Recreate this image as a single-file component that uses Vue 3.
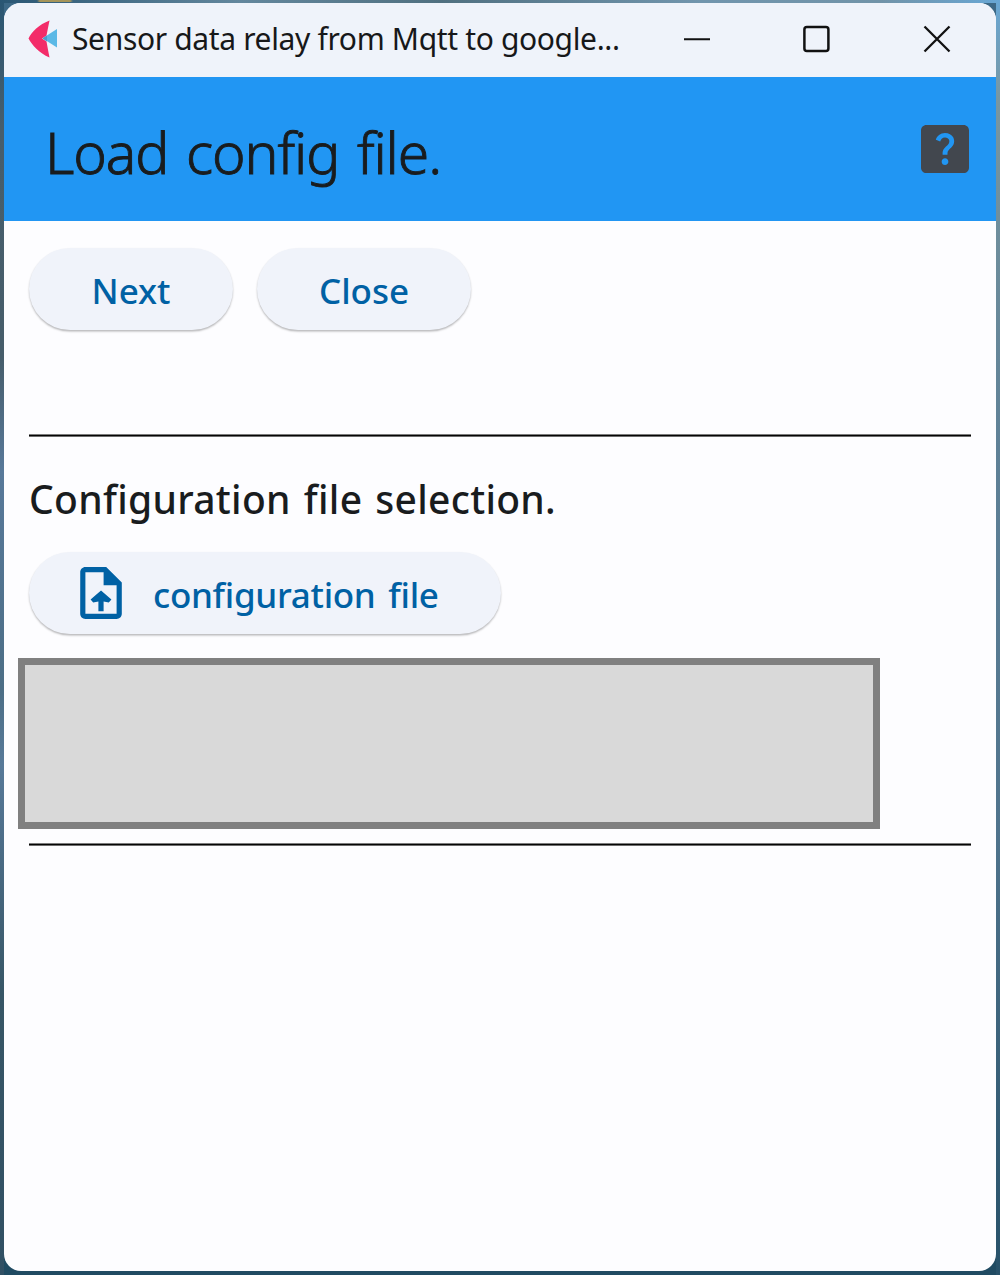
<script setup>
const title = 'Sensor data relay from Mqtt to google...'
const actions = [
  { label: 'Next', kind: 'next' },
  { label: 'Close', kind: 'close' },
]
</script>

<template>
  <div class="desktop">
    <main class="window">
      <header class="titlebar">
        <svg class="logo" viewBox="0 0 30 38" aria-hidden="true">
          <path d="M29 9 14.500 18.200 29 27.500Z" fill="#5bb9e6" />
          <path d="M21.500 .5C11 4.500 3.500 12 .5 18.500 4 25 11 33 21.500 37.500Q20 30 18.500 21.500L14 18.500l4.500-3Q20 8 21.500 .5Z" fill="#f32c69" />
          <path d="M19 15.500 14.500 18.500 19 21.500Z" fill="#4b9ccc" />
        </svg>
        <span class="caption">{{ title }}</span>
        <nav class="controls">
          <svg viewBox="0 0 28 28"><path d="M1 14.300H27" stroke-width="2" /></svg>
          <svg viewBox="0 0 28 28"><rect x="1.400" y="2" width="24" height="24" rx="2.500" stroke-width="2.500" /></svg>
          <svg viewBox="0 0 28 28"><path d="M1.500 1.500 26.500 26.500M26.500 1.500 1.500 26.500" stroke-width="2.300" /></svg>
        </nav>
      </header>

      <section class="appbar">
        <h1>Load config file.</h1>
        <svg class="help" viewBox="3 3 18 18" aria-label="Help">
          <path d="M19 3H5c-1.1 0-2 .9-2 2v14c0 1.1.9 2 2 2h14c1.1 0 2-.9 2-2V5c0-1.1-.9-2-2-2zm-6.99 15c-.7 0-1.26-.56-1.26-1.26 0-.71.56-1.25 1.26-1.25.71 0 1.25.54 1.25 1.25-.01.69-.54 1.26-1.25 1.26zm3.01-7.4c-.76 1.11-1.48 1.46-1.87 2.17-.16.29-.22.48-.22 1.41h-1.82c0-.49-.08-1.29.31-1.98.49-.87 1.42-1.39 1.96-2.16.57-.81.25-2.33-1.37-2.33-1.06 0-1.58.8-1.8 1.48l-1.65-.7C9.01 7.15 10.22 6 11.99 6c1.48 0 2.49.67 3.01 1.52.44.72.7 2.07.02 3.08z" />
        </svg>
      </section>

      <section class="content">
        <div class="actions">
          <button v-for="a in actions" :key="a.kind" class="pill" :class="a.kind"><span class="label">{{ a.label }}</span></button>
        </div>
        <hr />
        <h2>Configuration file selection.</h2>
        <button class="pill upload">
          <svg viewBox="4 2 16 20" aria-hidden="true">
            <path d="M14 2H6c-1.1 0-1.99.9-1.99 2L4 20c0 1.1.89 2 1.99 2H18c1.1 0 2-.9 2-2V8l-6-6zm4 18H6V4h7v5h5v11zM8 14.500l1 1.200 2-.4V19h2v-3.700l2 .4 1-1.200L12.010 11 8 14.500z" />
          </svg>
          <span class="label">configuration file</span>
        </button>
        <div class="preview"></div>
        <hr />
      </section>
    </main>
  </div>
</template>

<style>
body {
  margin: 0;
}
</style>

<style scoped>
* {
  box-sizing: border-box;
}
.desktop {
  width: 1000px;
  height: 1275px;
  padding: 3px 4px 4px;
  background:
    linear-gradient(90deg, transparent 37px, #a69559 40px, #a69559 70px, transparent 73px) top / 100% 2px no-repeat,
    linear-gradient(90deg, #295673, #63879d 24%, #507080 44%, #7195ad 70%, #7193a8 88%, #68a7d5) top / 100% 3px no-repeat,
    linear-gradient(#68a7d5, #7896a0 8%, #5f8197 35%, #50748d 65%, #275169) right / 4px 100% no-repeat,
    linear-gradient(#295673, #475e6c 10%, #465d6b 28%, #58799a 37%, #4c6e86 54%, #577999 60%, #375666 78%, #315064) left / 4px 100% no-repeat,
    linear-gradient(#3d6987 50%, #204b62 50%);
  font-family: "Noto Sans", "Open Sans", sans-serif;
  font-variant-ligatures: none;
}
.window {
  display: flex;
  flex-direction: column;
  height: 1268px;
  overflow: hidden;
  border-radius: 17px;
  background: #fdfdff;
}
.titlebar {
  display: flex;
  align-items: center;
  height: 74px;
  padding: 0 45px 2px 24px;
  background: #eff3fa;
}
.logo {
  width: 30px;
  height: 38px;
}
.caption {
  flex: 1;
  margin-left: 14px;
  font-size: 30px;
  line-height: 40px;
  letter-spacing: -0.35px;
  white-space: nowrap;
  color: #171819;
}
.controls {
  display: flex;
  gap: 92px;
}
.controls svg {
  width: 28px;
  height: 28px;
  fill: none;
  stroke: #111;
}
.appbar {
  display: flex;
  align-items: center;
  justify-content: space-between;
  height: 144px;
  padding: 0 27px 0 41px;
  background: #2196f3;
}
h1,
h2 {
  margin: 0;
  white-space: nowrap;
  color: #191c1e;
}
h1 {
  padding-top: 5px;
  font-size: 57px;
  font-weight: 300;
  line-height: 76px;
  letter-spacing: -1.1px;
  word-spacing: 4px;
  -webkit-text-stroke: 0.9px #191c1e;
}
.help {
  width: 48px;
  height: 48px;
  fill: #42474e;
}
.content {
  display: flex;
  flex-direction: column;
  padding: 27px 25px 0;
}
.actions {
  display: flex;
  gap: 24px;
}
.pill {
  display: flex;
  align-items: center;
  justify-content: center;
  height: 82px;
  padding: 0;
  border: 0;
  border-radius: 41px;
  background: #f0f3fa;
  box-shadow: 0 1.5px 2px rgba(0, 0, 0, 0.27);
  font: 550 35px/48px "Noto Sans", "Open Sans", sans-serif;
  font-variant-ligatures: none;
  color: #0061a4;
}
.label {
  padding-top: 4px;
  white-space: nowrap;
}
.next {
  width: 204px;
}
.close {
  width: 214px;
}
hr {
  width: 942px;
  height: 3px;
  margin: 104px 0 0;
  border: 0;
  background: linear-gradient(#7c7c7c 0 1px, #050505 1px 2px, #6c6c6c 2px);
}
h2 {
  margin-top: 34px;
  font-size: 39px;
  font-weight: 550;
  line-height: 56px;
  letter-spacing: 0.3px;
  word-spacing: 2.5px;
}
.upload {
  justify-content: flex-start;
  width: 472px;
  margin-top: 25px;
  padding-left: 51px;
  letter-spacing: -0.3px;
  word-spacing: 4px;
}
.upload svg {
  width: 42px;
  height: 52px;
  margin-right: 31px;
  fill: #0061a4;
}
.preview {
  width: 862px;
  height: 171px;
  margin: 24px 0 0 -11px;
  border: 7px solid #808080;
  background: #d9d9d9;
}
.preview + hr {
  margin-top: 14px;
}
</style>
